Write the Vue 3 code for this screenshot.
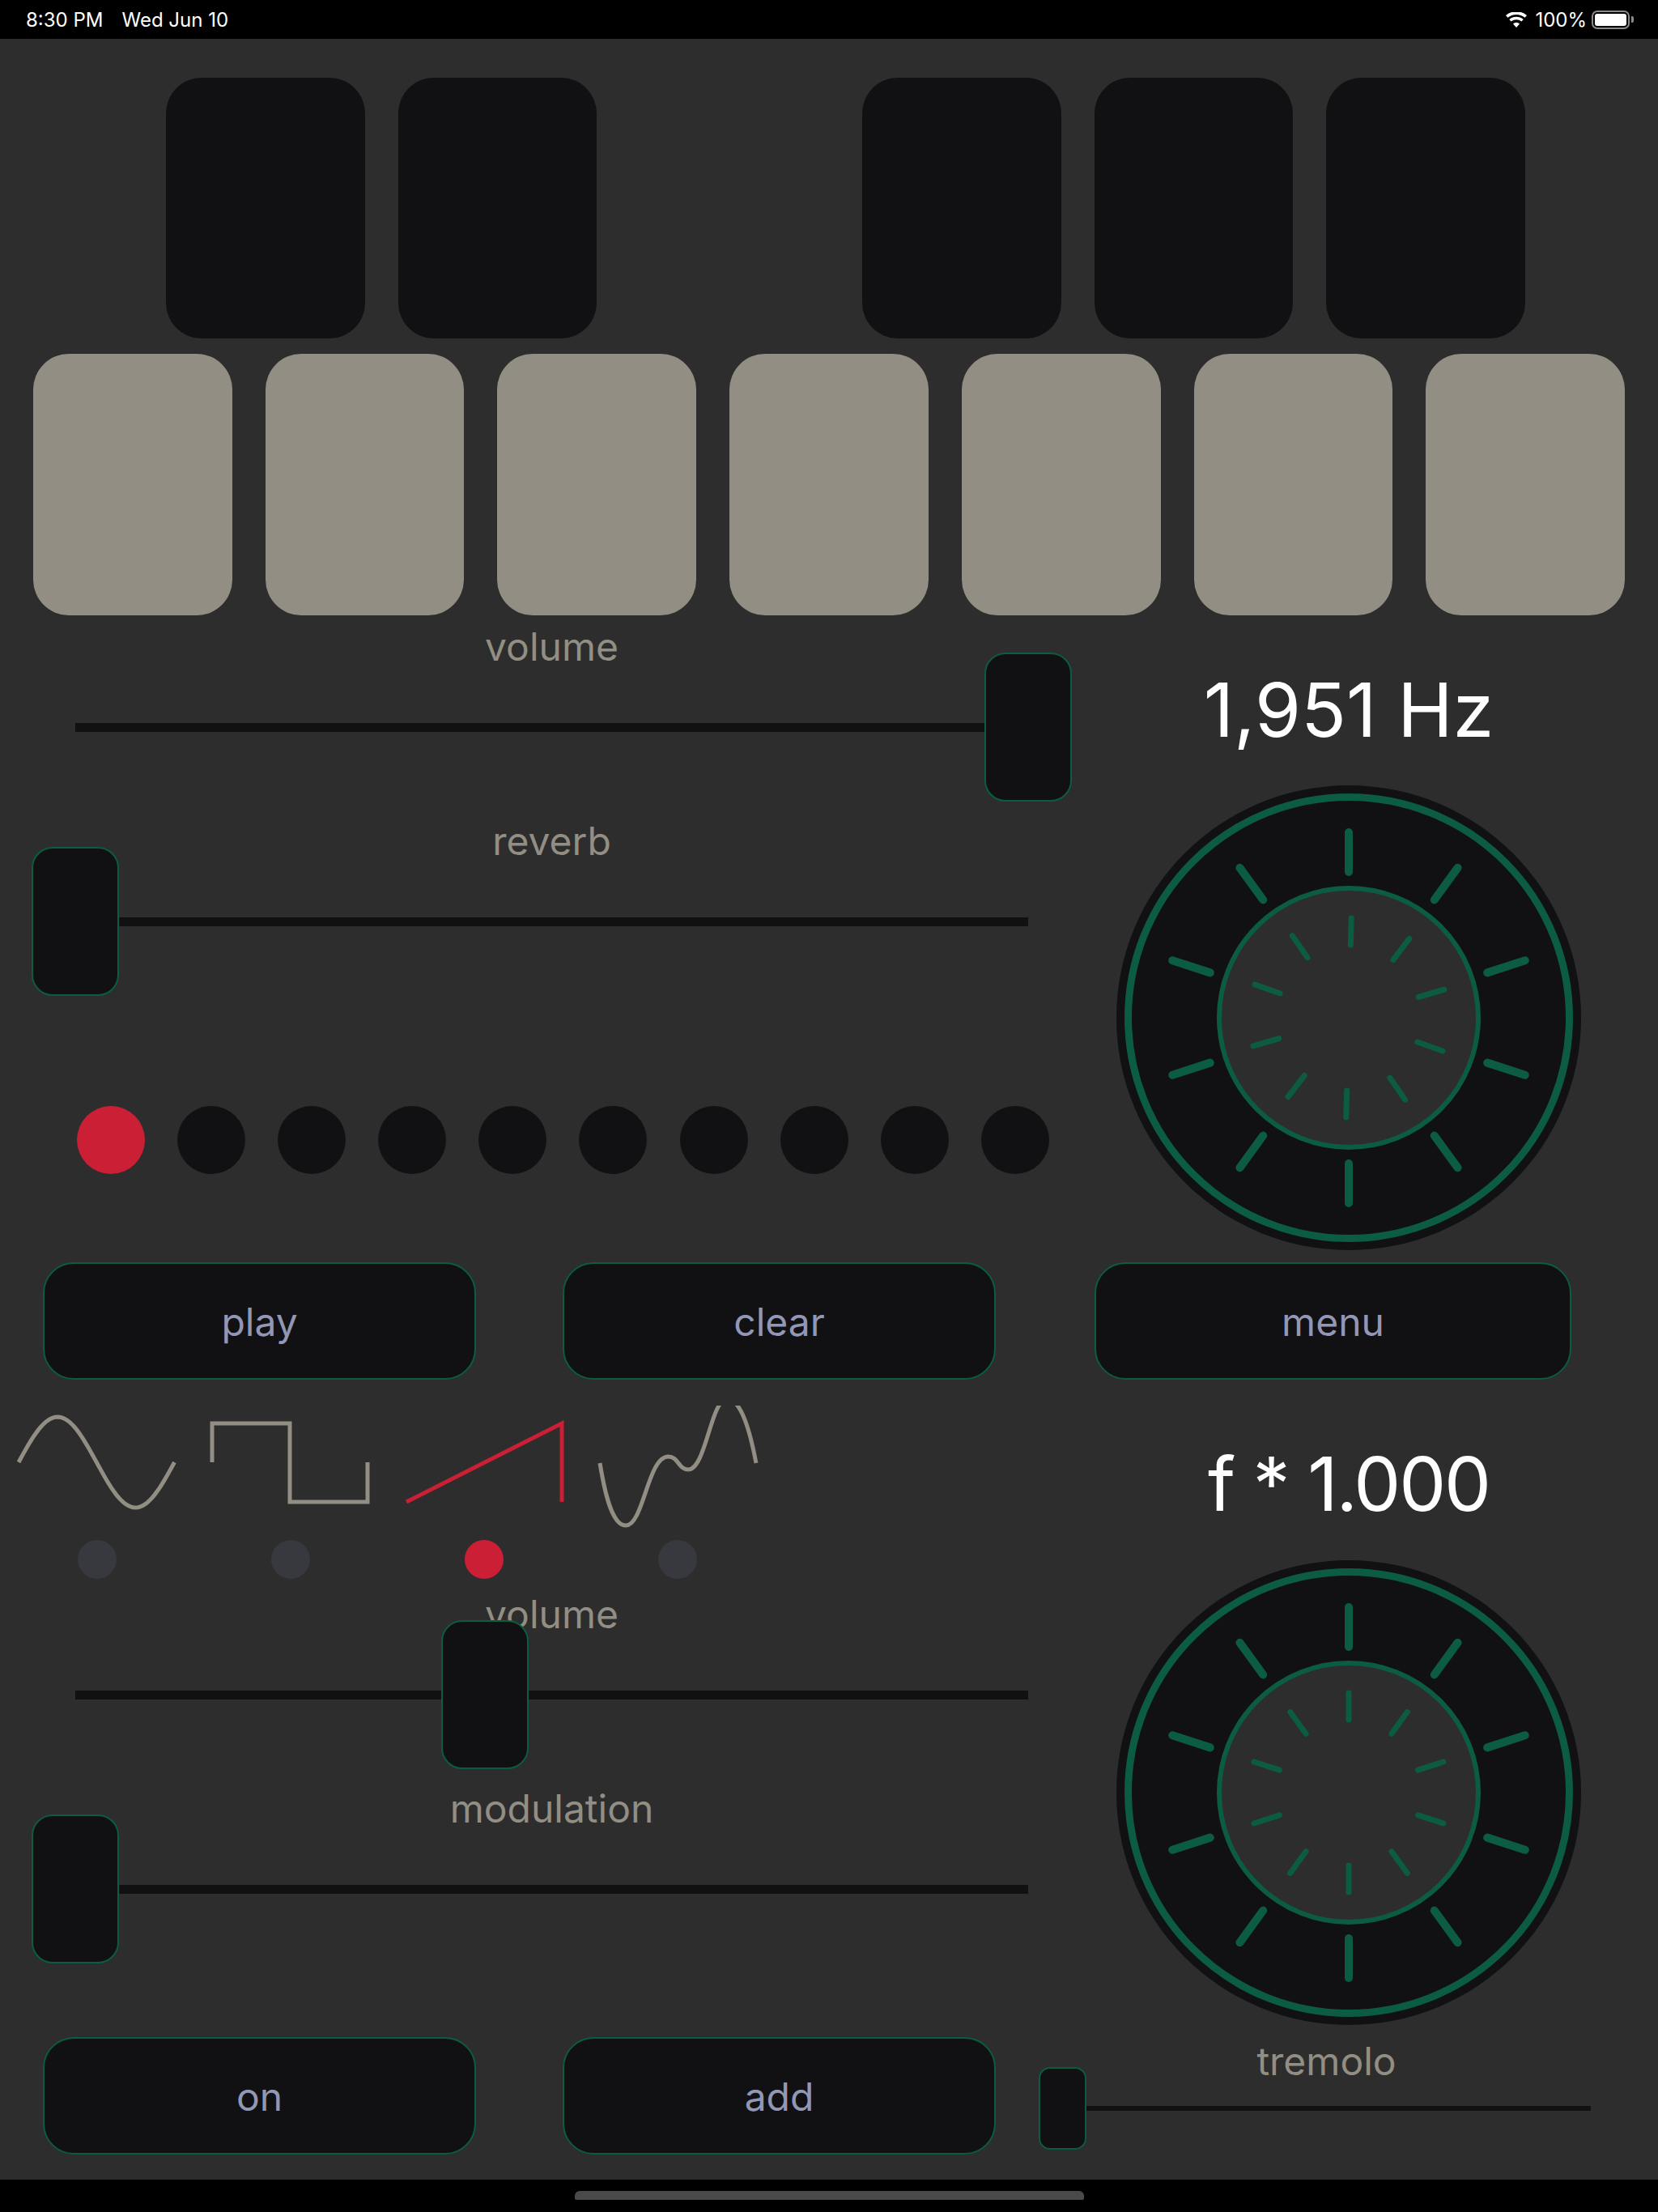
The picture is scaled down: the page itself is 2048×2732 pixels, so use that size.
<script setup>
const blackKeys = [true, true, false, true, true, true]
const whiteKeys = 7
const dots = Array.from({ length: 10 }, (_, i) => i === 0)

function ticks(rotate, inner, outer) {
  return Array.from({ length: 10 }, (_, i) => {
    const a = ((i * 36 + rotate) * Math.PI) / 180
    return {
      x1: 287 + Math.sin(a) * inner,
      y1: 287 - Math.cos(a) * inner,
      x2: 287 + Math.sin(a) * outer,
      y2: 287 - Math.cos(a) * outer,
    }
  })
}
const outerTicks = ticks(0, 180, 229)
const innerTicks = ticks(1.5, 90, 123)
const innerTicksStraight = ticks(0, 90, 123)

function sinePath() {
  const pts = []
  for (let i = 0; i <= 64; i++) {
    const t = i / 64
    pts.push(`${(23 + 192.5 * t).toFixed(1)} ${(70 - 56 * Math.sin(2 * Math.PI * t)).toFixed(1)}`)
  }
  return 'M' + pts.join('L')
}

const waves = [
  { d: sinePath(), on: false, w: 5 },
  { d: 'M262 70V22H358V119H454V70', on: false, w: 5 },
  { d: 'M502 119L694 22V119', on: true, w: 5 },
  { d: 'M741 71C748 114 757 148 773 148C795 148 800 63 825.5 63C838 63 838 79 850 79C872 79 878 -8 898 -8C914 -8 925 24 934 71', on: false, w: 5 },
]
const waveDots = [false, false, true, false]
</script>

<template>
  <div class="page">
    <header class="status">
      <div class="clock"><span>8:30 PM</span><span>Wed Jun 10</span></div>
      <div class="sys">
        <svg class="wifi" viewBox="0 0 26 19">
          <path d="M13 19l-4-4.6a6 6 0 0 1 8 0zM6.6 11.6L4.3 9a13.5 13.5 0 0 1 17.4 0l-2.3 2.6a10 10 0 0 0-12.8 0zM2.4 6.8L0 4.1a19.7 19.7 0 0 1 26 0l-2.4 2.7a16.3 16.3 0 0 0-21.2 0z" fill="#fff" />
        </svg>
        <span class="pct">100%</span>
        <div class="battery"><div class="fill"></div></div>
        <div class="nub"></div>
      </div>
    </header>

    <main class="stage">
      <section class="keys black-row">
        <div v-for="(on, i) in blackKeys" :key="i" class="key" :class="{ black: on }"></div>
      </section>
      <section class="keys white-row">
        <div v-for="i in whiteKeys" :key="i" class="key white"></div>
      </section>

      <section class="panel">
        <div class="left">
          <div class="slider first" style="--v: 1">
            <div class="label">volume</div>
            <div class="rail"><div class="track"></div><div class="thumb"></div></div>
          </div>
          <div class="slider" style="--v: 0">
            <div class="label">reverb</div>
            <div class="rail"><div class="track"></div><div class="thumb"></div></div>
          </div>
          <div class="dots">
            <div v-for="(on, i) in dots" :key="i" class="dot" :class="{ lit: on }"></div>
          </div>
        </div>
        <div class="right">
          <div class="readout">1,951 Hz</div>
          <svg class="knob" viewBox="0 0 574 574">
            <circle cx="287" cy="287" r="287" fill="#111012" />
            <circle cx="287" cy="287" r="272.5" fill="none" stroke="#0b5c42" stroke-width="9" />
            <circle cx="287" cy="287" r="160" fill="#2d2d2d" stroke="#0b5c42" stroke-width="6" />
            <line v-for="(t, i) in outerTicks" :key="'o' + i" :x1="t.x1" :y1="t.y1" :x2="t.x2" :y2="t.y2" stroke="#0b5c42" stroke-width="10" stroke-linecap="round" />
            <line v-for="(t, i) in innerTicks" :key="'i' + i" :x1="t.x1" :y1="t.y1" :x2="t.x2" :y2="t.y2" stroke="#0b5c42" stroke-width="7" stroke-linecap="round" />
          </svg>
        </div>
      </section>

      <section class="buttons">
        <button class="btn">play</button>
        <button class="btn">clear</button>
        <button class="btn wide">menu</button>
      </section>

      <section class="panel lower">
        <div class="left">
          <svg class="waves" viewBox="0 0 958 164">
            <path v-for="(w, i) in waves" :key="i" :d="w.d" fill="none" :stroke="w.on ? '#cb1f36' : '#928e83'" :stroke-width="w.w" />
          </svg>
          <div class="wave-dots">
            <div v-for="(on, i) in waveDots" :key="i" class="wave-cell">
              <div class="wave-dot" :class="{ lit: on }"></div>
            </div>
          </div>
          <div class="slider third" style="--v: 0.43">
            <div class="label">volume</div>
            <div class="rail"><div class="track"></div><div class="thumb"></div></div>
          </div>
          <div class="slider" style="--v: 0">
            <div class="label">modulation</div>
            <div class="rail"><div class="track"></div><div class="thumb"></div></div>
          </div>
        </div>
        <div class="right">
          <div class="readout tight">f * 1.000</div>
          <svg class="knob" viewBox="0 0 574 574">
            <circle cx="287" cy="287" r="287" fill="#111012" />
            <circle cx="287" cy="287" r="272.5" fill="none" stroke="#0b5c42" stroke-width="9" />
            <circle cx="287" cy="287" r="160" fill="#2d2d2d" stroke="#0b5c42" stroke-width="6" />
            <line v-for="(t, i) in outerTicks" :key="'o' + i" :x1="t.x1" :y1="t.y1" :x2="t.x2" :y2="t.y2" stroke="#0b5c42" stroke-width="10" stroke-linecap="round" />
            <line v-for="(t, i) in innerTicksStraight" :key="'i' + i" :x1="t.x1" :y1="t.y1" :x2="t.x2" :y2="t.y2" stroke="#0b5c42" stroke-width="7" stroke-linecap="round" />
          </svg>
        </div>
      </section>

      <section class="buttons last">
        <button class="btn">on</button>
        <button class="btn">add</button>
        <div class="slider small" style="--v: 0">
          <div class="label">tremolo</div>
          <div class="rail"><div class="track"></div><div class="thumb"></div></div>
        </div>
      </section>
    </main>

    <footer class="home"><div class="indicator"></div></footer>
  </div>
</template>

<style scoped>
.page {
  width: 2048px;
  height: 2732px;
  display: flex;
  flex-direction: column;
  background: #2d2d2d;
  font-family: Inter, "Liberation Sans", sans-serif;
  overflow: hidden;
}
.status {
  height: 48px;
  flex: none;
  background: #000;
  color: #fff;
  display: flex;
  align-items: center;
  justify-content: space-between;
  padding: 0 30px 0 32px;
  font-size: 24px;
}
.clock { display: flex; gap: 23px; }
.sys { display: flex; align-items: center; }
.wifi { width: 26px; height: 19px; margin-right: 10px; }
.pct { margin-right: 6px; }
.battery {
  width: 47px;
  height: 23px;
  box-sizing: border-box;
  border: 2px solid #8a8a8a;
  border-radius: 7px;
  padding: 2px;
}
.fill { width: 100%; height: 100%; background: #fff; border-radius: 3px; }
.nub { width: 3px; height: 8px; margin-left: 2px; background: #8a8a8a; border-radius: 0 2px 2px 0; }

.stage { flex: 1; display: flex; flex-direction: column; }
.keys { display: flex; gap: 41px; flex: none; }
.black-row { padding: 48px 164px 0 205px; height: 322px; box-sizing: content-box; }
.white-row { padding: 19px 41px 0; height: 323px; }
.key { flex: 1; border-radius: 44px; }
.black { background: #111012; }
.white { background: #928e83; }

.panel { display: flex; height: 799px; flex: none; }
.panel .left { width: 1379px; flex: none; display: flex; flex-direction: column; align-items: flex-start; }
.right { width: 574px; flex: none; display: flex; flex-direction: column; align-items: center; }
.readout {
  height: 100px;
  line-height: 100px;
  margin-top: 67px;
  margin-bottom: 43px;
  font-size: 92px;
  color: #fff;
  white-space: nowrap;
}
.tight { letter-spacing: -2.2px; }
.knob { width: 574px; height: 574px; display: block; flex: none; }

.slider { margin-left: 39px; margin-top: 21px; width: 1285px; --thumb: 108px; }
.first { margin-top: 11px; }
.third { margin-top: 16px; }
.label {
  height: 56px;
  line-height: 56px;
  margin-bottom: -21px;
  text-align: center;
  font-size: 48px;
  color: #928e83;
}
.rail { position: relative; height: 184px; display: flex; align-items: center; }
.track { flex: 1; height: 11px; margin: 0 54px; background: #111012; }
.thumb {
  position: absolute;
  top: 0;
  bottom: 0;
  width: var(--thumb);
  left: calc((100% - var(--thumb)) * var(--v));
  box-sizing: border-box;
  background: #111012;
  border: 2px solid #0b5c42;
  border-radius: 26px;
}
.small { width: 711px; margin: 2px 0 0 53px; --thumb: 59px; }
.small .rail { height: 102px; }
.small .track { height: 6px; margin: 0 29.5px; }
.small .thumb { border-radius: 14px; }

.dots { display: flex; gap: 40.2px; margin: 136px 0 0 94.5px; }
.dot { width: 84px; height: 84px; border-radius: 50%; background: #111012; }
.dot.lit { background: #cb1f36; }

.buttons { display: flex; padding-left: 53px; flex: none; height: 161px; }
.btn {
  width: 535px;
  height: 145px;
  box-sizing: border-box;
  background: #111012;
  border: 2px solid #0b5c42;
  border-radius: 38px;
  color: #9297b5;
  font: inherit;
  font-size: 48px;
  padding: 2px 0 0;
}
.btn + .btn { margin-left: 107px; }
.btn.wide { width: 589px; margin-left: 122px; }
.last { height: 176px; }

.lower { height: 796px; }
.lower .readout { margin-top: 63px; margin-bottom: 44px; }
.waves { width: 958px; height: 164px; display: block; margin-top: 16px; flex: none; }
.wave-dots { display: flex; width: 957px; margin-top: 2px; }
.wave-cell { flex: 1; display: flex; justify-content: center; }
.wave-dot { width: 48px; height: 48px; border-radius: 50%; background: #38383f; }
.wave-dot.lit { background: #cb1f36; }

.home { height: 40px; flex: none; background: #000; padding-top: 14px; box-sizing: border-box; display: flex; justify-content: center; }
.indicator { width: 629px; height: 11px; background: #4a4a4a; border-radius: 6px 6px 2px 2px; }
</style>
